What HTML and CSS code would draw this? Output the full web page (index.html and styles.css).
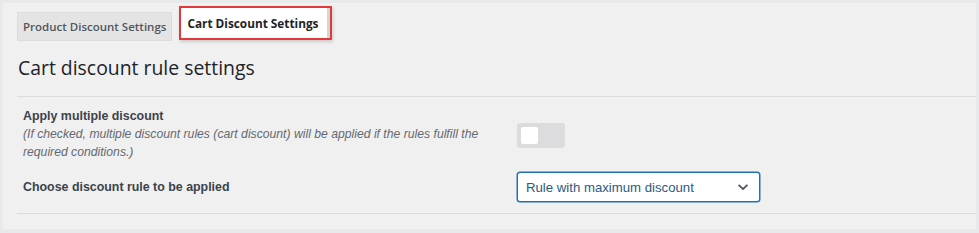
FILE: index.html
```html
<!DOCTYPE html>
<html lang="en">
<head>
    <meta charset="UTF-8">
    <title>Cart Discount Settings</title>
    <link rel="stylesheet" href="styles.css">
</head>
<body>
    <div class="wrap">
        <div class="nav-tabs">
            <a class="nav-tab">Product Discount Settings</a>
            <a class="nav-tab nav-tab-active">Cart Discount Settings</a>
        </div>

        <h2 class="section-title">Cart discount rule settings</h2>

        <div class="form-table">
            <div class="form-row">
                <div class="form-label">
                    <span class="label-title">Apply multiple discount</span>
                    <span class="label-desc">(If checked, multiple discount rules (cart discount) will be applied if the rules fulfill the required conditions.)</span>
                </div>
                <div class="form-field">
                    <span class="toggle"><span class="toggle-knob"></span></span>
                </div>
            </div>
            <div class="form-row form-row-select">
                <div class="form-label">
                    <span class="label-title">Choose discount rule to be applied</span>
                </div>
                <div class="form-field">
                    <div class="select">
                        <span>Rule with maximum discount</span>
                        <svg width="12" height="8" viewBox="0 0 12 8"><path d="M1.5 1.8 L6 6 L10.5 1.8" fill="none" stroke="#50575e" stroke-width="1.8"/></svg>
                    </div>
                </div>
            </div>
        </div>
    </div>
</body>
</html>
```

FILE: styles.css
```css
* {
    margin: 0;
    padding: 0;
    box-sizing: border-box;
}
body {
    background-color: #e8e9eb;
    padding: 3px 3px 4px 3px;
    font-family: "Liberation Sans", Arial, sans-serif;
}
.wrap {
    background-color: #f0f0f1;
    height: 226px;
    padding: 3px 0 0 14px;
}
.nav-tabs {
    display: flex;
    align-items: flex-start;
    gap: 7px;
}
.nav-tab {
    margin-top: 6px;
    height: 29px;
    padding: 0 5px 0 5px;
    line-height: 27px;
    font-family: "Open Sans", sans-serif;
    font-size: 11.5px;
    font-weight: 600;
    color: #50575e;
    background-color: #e4e4e4;
    border: 1px solid #dcdcde;
}
.nav-tab-active {
    margin-top: 0;
    height: 34px;
    padding: 0 12px 0 6px;
    line-height: 30px;
    font-size: 11.8px;
    color: #1d2327;
    font-weight: 700;
    background-color: #fff;
    border: 2px solid #e4393c;
    box-shadow: inset -3px 0 0 #d5d5d5, 1px 2px 3px rgba(0, 0, 0, 0.15);
}
.section-title {
    margin: 13px 0 0 1px;
    font-family: "Open Sans", sans-serif;
    font-size: 19.4px;
    font-weight: 400;
    color: #1d2327;
    height: 42px;
    line-height: 28px;
}
.form-table {
    border-top: 1px solid #dcdcde;
    border-bottom: 1px solid #dcdcde;
    padding: 10px 0 11px 6px;
}
.form-row {
    display: flex;
    align-items: center;
}
.form-row-select {
    margin-top: 11px;
}
.form-label {
    width: 494px;
    padding-right: 4px;
    font-size: 12.4px;
    line-height: 18px;
}
.label-title {
    display: block;
    font-weight: 700;
    color: #3c434a;
}
.label-desc {
    display: block;
    font-size: 12.2px;
    font-style: italic;
    color: #646970;
}
.toggle {
    display: block;
    width: 48px;
    height: 25px;
    margin-top: 2px;
    background-color: #dcdcde;
    border-radius: 3px;
    padding: 4px;
}
.toggle-knob {
    display: block;
    width: 17px;
    height: 17px;
    background-color: #fff;
    border-radius: 2px;
}
.select {
    width: 243px;
    height: 30px;
    display: flex;
    align-items: center;
    justify-content: space-between;
    padding: 0 10px 0 8px;
    background-color: #fff;
    border: 1px solid #2271b1;
    border-radius: 3px;
    box-shadow: 0 0 0 0.5px #2271b1;
    font-size: 13.2px;
    color: #2c5a80;
}
```
